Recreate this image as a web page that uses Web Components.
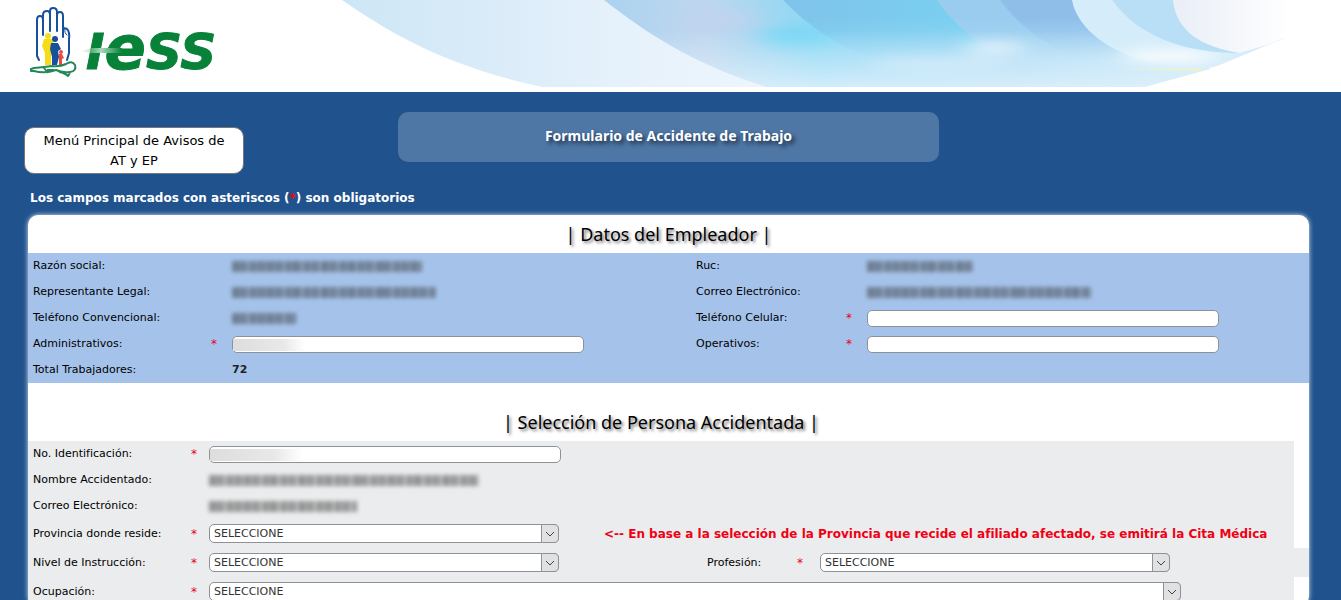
<!DOCTYPE html>
<html lang="es">
<head>
<meta charset="utf-8">
<meta name="viewport" content="width=device-width, initial-scale=1">
<title>Formulario de Accidente de Trabajo</title>
<style>
    body {
        margin: 0;
        min-height: 100vh;
        background: #20528d;
        color: #000;
        font: 11px/16px Verdana, "DejaVu Sans", sans-serif;
        overflow-x: hidden;
    }
</style>
</head>
<body>
<iess-header></iess-header>
<form-toolbar>
    <menu-button slot="menu">Menú Principal de Avisos de AT y EP</menu-button>
    Formulario de Accidente de Trabajo
</form-toolbar>
<required-notice></required-notice>
<form-panel>
    <form-section heading="Datos del Empleador" class="employer">
        <form-field label="Razón social:" type="hidden-value" size="190"></form-field>
        <form-field label="Ruc:" type="hidden-value" size="106"></form-field>
        <form-field label="Representante Legal:" type="hidden-value" size="204"></form-field>
        <form-field label="Correo Electrónico:" type="hidden-value" size="224"></form-field>
        <form-field label="Teléfono Convencional:" type="hidden-value" size="64"></form-field>
        <form-field label="Teléfono Celular:" type="text" required></form-field>
        <form-field label="Administrativos:" type="text" required covered="72"></form-field>
        <form-field label="Operativos:" type="text" required></form-field>
        <form-field label="Total Trabajadores:" type="output" value="72"></form-field>
    </form-section>
    <form-section heading="Selección de Persona Accidentada" class="person">
        <form-row><form-field label="No. Identificación:" type="text" required covered="92"></form-field></form-row>
        <form-row><form-field label="Nombre Accidentado:" type="hidden-value" size="270"></form-field></form-row>
        <form-row><form-field label="Correo Electrónico:" type="hidden-value" size="148"></form-field></form-row>
        <form-row tall>
            <form-field label="Provincia donde reside:" type="select" required></form-field>
            <field-note>&lt;-- En base a la selección de la Provincia que recide el afiliado afectado, se emitirá la Cita Médica</field-note>
        </form-row>
        <form-row tall full>
            <form-field label="Nivel de Instrucción:" type="select" required></form-field>
            <form-field class="second" label="Profesión:" type="select" required></form-field>
        </form-row>
        <form-row tall><form-field class="wide" label="Ocupación:" type="select" required></form-field></form-row>
    </form-section>
</form-panel>

<script>
    class IessHeader extends HTMLElement {
        connectedCallback() {
            this.attachShadow({ mode: 'open' });
            this.shadowRoot.innerHTML = `
                <style>
                    :host {
                        display: block;
                        background: #fff;
                    }

                    header {
                        display: flex;
                        height: 92px;
                        overflow: hidden;
                    }

                    .logo {
                        flex: 0 0 320px;
                        width: 320px;
                        height: 92px;
                    }

                    .logo text {
                        font-family: "DejaVu Sans", sans-serif;
                        font-weight: bold;
                        font-style: italic;
                        font-size: 50px;
                        fill: #078238;
                        stroke: #078238;
                        stroke-width: 1px;
                    }

                    .logo .tall {
                        font-size: 61px;
                    }

                    .sky {
                        flex: 1;
                        min-width: 0;
                        height: 92px;
                    }
                </style>

                <header>
                    <svg class="logo" viewBox="0 0 320 92" role="img" aria-label="IESS">
                        <defs>
                            <linearGradient id="streak">
                                <stop offset="0" stop-color="#8fc9a6" stop-opacity="0"/>
                                <stop offset=".5" stop-color="#a9d8bb"/>
                                <stop offset="1" stop-color="#078238"/>
                            </linearGradient>
                        </defs>
                        <!-- hand -->
                        <g fill="none" stroke="#17509c" stroke-width="2" stroke-linecap="round" stroke-linejoin="round">
                            <path d="M39 60 L37 56 V20 Q37 16 40 16 Q43 16 43 20 V35"/>
                            <path d="M43 33 V15 Q43 11 47 11 Q50 11 50 15 V31"/>
                            <path d="M50 29 V11 Q50 8 53 8 Q57 8 57 12 V31"/>
                            <path d="M57 29 V15 Q57 12 60 12 Q63 12 63 16 V37"/>
                            <path d="M63 30 Q64 27 67 29 Q70 32 69 39 V53 L67 60"/>
                            <path d="M65 29 Q64 33 67 35" stroke-width="1"/>
                        </g>
                        <!-- family -->
                        <g fill="#f6dc16">
                            <circle cx="48" cy="36" r="3"/>
                            <path d="M44 39 H52 L54 43 L51 52 V65 H45 V53 L42 46 Z"/>
                        </g>
                        <g fill="#17509c">
                            <circle cx="55" cy="39" r="3"/>
                            <path d="M51 43 H58 L61 49 L58 51 L59 57 L57 65 H52 V57 L50 49 Z"/>
                        </g>
                        <g fill="#ec4a3c">
                            <circle cx="61" cy="52" r="2"/>
                            <path d="M59 54 H62 L64 58 L62 59 V65 H59 Z"/>
                        </g>
                        <!-- cradle -->
                        <path d="M34 68 Q45 67 52 66 Q60 67 66 64 Q72 60 75 65 Q77 71 70 72 Q62 73 56 70 Q45 74 34 71 L31 71 V69 Z M44 68 L48 73 M47 70 H54 M59 72 Q65 73 68 76 L70 73" fill="none" stroke="#238858" stroke-width="2" stroke-linejoin="round"/>
                        <text x="86" y="69">I<tspan class="tall">e</tspan>SS</text>
                        <path d="M80 51 L92 48 H122 V53 H90 Z" fill="url(#streak)"/>
                    </svg>
                    <svg class="sky" viewBox="320 0 1021 92" preserveAspectRatio="xMinYMin slice" aria-hidden="true">
                        <defs>
                            <clipPath id="arc">
                                <path d="M342 0 C388 32 445 66 542 87 H1144 L1210 69 L1285 38 V0 Z"/>
                            </clipPath>
                            <linearGradient id="pale">
                                <stop offset="0" stop-color="#cbe5f5"/>
                                <stop offset=".6" stop-color="#e5f1fb"/>
                                <stop offset="1" stop-color="#f0f7fd"/>
                            </linearGradient>
                            <linearGradient id="mid">
                                <stop offset="0" stop-color="#abd3ef"/>
                                <stop offset=".17" stop-color="#bfd6ee"/>
                                <stop offset=".35" stop-color="#8bd8f5"/>
                                <stop offset=".65" stop-color="#a4d8f3"/>
                                <stop offset="1" stop-color="#c9e9f9"/>
                            </linearGradient>
                            <linearGradient id="deep">
                                <stop offset="0" stop-color="#80c3ea"/>
                                <stop offset=".7" stop-color="#78d2f2"/>
                                <stop offset="1" stop-color="#b5ddf5"/>
                            </linearGradient>
                            <linearGradient id="mist" x2="0" y2="1">
                                <stop offset=".35" stop-color="#e3f2fc" stop-opacity="0"/>
                                <stop offset="1" stop-color="#e3f2fc" stop-opacity=".8"/>
                            </linearGradient>
                            <linearGradient id="edge">
                                <stop offset="0" stop-color="#e9eef7"/>
                                <stop offset="1" stop-color="#fff"/>
                            </linearGradient>
                            <linearGradient id="fall" x2="0" y2="1">
                                <stop offset=".3" stop-color="#fff"/>
                                <stop offset="1" stop-color="#000"/>
                            </linearGradient>
                            <mask id="fade" maskUnits="userSpaceOnUse" x="320" y="0" width="1021" height="60">
                                <rect x="320" width="1021" height="60" fill="url(#fall)"/>
                            </mask>
                            <filter id="soft" x="-50%" y="-100%" width="200%" height="300%">
                                <feGaussianBlur stdDeviation="12 6"/>
                            </filter>
                        </defs>
                        <g clip-path="url(#arc)">
                            <rect x="320" width="490" height="87" fill="url(#pale)"/>
                            <path d="M604 0 C645 32 694 65 768 87 H1210 V0 Z" fill="url(#mid)"/>
                            <g filter="url(#soft)">
                                <ellipse cx="718" cy="20" rx="36" ry="12" fill="#c0d3ed" opacity=".8"/>
                                <ellipse cx="797" cy="39" rx="35" ry="11" fill="#78d7f5"/>
                            </g>
                            <g mask="url(#fade)">
                                <path d="M783 0 C806 24 838 48 886 64 H1090 V0 Z" fill="url(#deep)"/>
                                <path d="M937 0 C947 15 965 35 1005 62 H1110 V0 Z" fill="#9accef"/>
                                <path d="M1000 0 C1016 22 1045 48 1090 62 H1130 V0 Z" fill="#8fbfe9"/>
                            </g>
                            <g filter="url(#soft)">
                                <ellipse cx="995" cy="48" rx="30" ry="8" fill="#edf8fe" opacity=".7"/>
                                <ellipse cx="940" cy="64" rx="70" ry="8" fill="#cdeafa" opacity=".6"/>
                            </g>
                            <path d="M604 0 C645 32 694 65 768 87 H1210 V0 Z" fill="url(#mist)"/>
                            <path d="M1072 0 C1078 33 1123 69 1208 68 L1290 52 V0 Z" fill="#d5edfa"/>
                            <ellipse cx="1170" cy="56" rx="50" ry="7" fill="#f7fbfe" filter="url(#soft)"/>
                            <path d="M1112 0 C1138 36 1183 53 1240 53 L1290 38 V0 Z" fill="#b9dff6"/>
                            <path d="M1173 0 C1176 31 1201 47 1240 53 L1290 38 V0 Z" fill="url(#edge)"/>
                            <path d="M1120 69 L1207 68 L1198 71 Z" fill="#eaf2cf"/>
                        </g>
                    </svg>
                </header>
            `;
        }
    }

    class FormToolbar extends HTMLElement {
        connectedCallback() {
            this.attachShadow({ mode: 'open' });
            this.shadowRoot.innerHTML = `
                <style>
                    :host {
                        display: grid;
                        grid-template-columns: 1fr minmax(300px, 42%) 1fr;
                        align-items: start;
                        padding: 20px 28px 0 24px;
                    }

                    .menu {
                        padding-top: 15px;
                    }

                    h1 {
                        margin: 0;
                        padding: 14px 0 16px;
                        border-radius: 10px;
                        background: #4f77a5;
                        color: #fff;
                        text-align: center;
                        text-shadow: 3px 3px 4px #1a2b44;
                        font: bold 14px/20px "Noto Sans", sans-serif;
                    }
                </style>

                <div class="menu"><slot name="menu"></slot></div>
                <h1><slot></slot></h1>
            `;
        }
    }

    class MenuButton extends HTMLElement {
        connectedCallback() {
            this.attachShadow({ mode: 'open' });
            this.shadowRoot.innerHTML = `
                <style>
                    :host {
                        display: block;
                        width: 220px;
                    }

                    button {
                        width: 100%;
                        padding: 3px 16px 2px;
                        border: 1px solid #777;
                        border-radius: 10px;
                        background: #fff;
                        color: #000;
                        font: 13px/20px Verdana, "DejaVu Sans", sans-serif;
                        cursor: pointer;
                    }
                </style>

                <button type="button"><slot></slot></button>
            `;
        }
    }

    class RequiredNotice extends HTMLElement {
        connectedCallback() {
            this.attachShadow({ mode: 'open' });
            this.shadowRoot.innerHTML = `
                <style>
                    :host {
                        display: block;
                        padding: 16px 30px 9px;
                        color: #fff;
                        font-size: 12px;
                        font-weight: bold;
                    }

                    p {
                        margin: 0;
                    }

                    span {
                        color: #f00;
                    }
                </style>

                <p>Los campos marcados con asteriscos (<span>*</span>) son obligatorios</p>
            `;
        }
    }

    class FormPanel extends HTMLElement {
        connectedCallback() {
            this.attachShadow({ mode: 'open' });
            this.shadowRoot.innerHTML = `
                <style>
                    :host {
                        display: block;
                        margin: 0 32px 0 28px;
                        border-radius: 10px;
                        background: #fff;
                        box-shadow: 0 0 5px #dde8f5;
                    }
                </style>

                <form><slot></slot></form>
            `;
        }
    }

    class FormSection extends HTMLElement {
        connectedCallback() {
            this.attachShadow({ mode: 'open' });
            this.shadowRoot.innerHTML = `
                <style>
                    :host {
                        display: block;
                    }

                    h2 {
                        margin: 0;
                        text-align: center;
                        text-shadow: 2px 2px 3px #777;
                        font: 18px/38px "Noto Sans", sans-serif;
                    }

                    :host(.employer) .rows {
                        display: grid;
                        grid-template-columns: 663fr 613fr;
                        grid-auto-rows: 26px;
                        padding-left: 5px;
                        background: #a5c3ea;
                    }

                    :host(.person) h2 {
                        margin-right: 15px;
                        padding-top: 20px;
                    }

                    ::slotted(form-field) {
                        --label: 178px;
                        --mark: 21px;
                    }

                    ::slotted(form-field:nth-child(even)) {
                        --label: 150px;
                    }
                </style>

                <h2>| ${this.getAttribute('heading')} |</h2>
                <div class="rows"><slot></slot></div>
            `;
        }
    }

    class FormRow extends HTMLElement {
        connectedCallback() {
            this.attachShadow({ mode: 'open' });
            this.shadowRoot.innerHTML = `
                <style>
                    :host {
                        display: flex;
                        align-items: center;
                        height: 26px;
                        margin-right: 15px;
                        padding-left: 5px;
                        background: #ebeced;
                    }

                    :host([tall]) {
                        height: 29px;
                    }

                    :host([full]) {
                        margin-right: 0;
                    }

                    ::slotted(form-field) {
                        --label: 158px;
                        --mark: 18px;
                        --control: 350px;
                    }

                    ::slotted(.second) {
                        --label: 90px;
                        --mark: 23px;
                        margin-left: 148px;
                    }

                    ::slotted(.wide) {
                        --control: 972px;
                    }

                    ::slotted(field-note) {
                        margin-left: 45px;
                    }
                </style>

                <slot></slot>
            `;
        }
    }

    class FieldNote extends HTMLElement {
        connectedCallback() {
            this.attachShadow({ mode: 'open' });
            this.shadowRoot.innerHTML = `
                <style>
                    :host {
                        display: block;
                        color: #f00014;
                        font-size: 12px;
                        font-weight: bold;
                        white-space: nowrap;
                    }
                </style>

                <slot></slot>
            `;
        }
    }

    // type: text | select | output | hidden-value
    class FormField extends HTMLElement {
        connectedCallback() {
            this.attachShadow({ mode: 'open' });
            this.shadowRoot.innerHTML = `
                <style>
                    :host {
                        display: grid;
                        grid-template-columns: var(--label) var(--mark) auto;
                        align-items: center;
                        justify-content: start;
                    }

                    .mark {
                        color: #e8001c;
                        font-size: 12px;
                    }

                    input, select {
                        box-sizing: border-box;
                        display: block;
                        border: 1px solid #8d9299;
                        border-radius: 5px;
                        background: #fff;
                        color: #333;
                        font: 11px/16px Verdana, "DejaVu Sans", sans-serif;
                    }

                    input {
                        width: 352px;
                        height: 17px;
                        padding: 0 2px;
                    }

                    select {
                        width: var(--control);
                        height: 19px;
                        padding: 0 20px 0 4px;
                        appearance: none;
                    }

                    .box {
                        position: relative;
                    }

                    .arrow {
                        position: absolute;
                        top: 0;
                        right: 0;
                        width: 18px;
                        height: 19px;
                        pointer-events: none;
                    }

                    .cover {
                        position: absolute;
                        top: 3px;
                        left: 1px;
                        height: 12px;
                        background: linear-gradient(90deg, #ddd, #e8e8e8 70%, #fff);
                    }

                    output {
                        color: #222;
                        font-weight: bold;
                    }

                    .smudge {
                        display: block;
                        height: 11px;
                        opacity: .6;
                        filter: blur(2px);
                        background:
                            repeating-linear-gradient(90deg, transparent 0 4px, #0003 4px 7px, transparent 7px 29px),
                            repeating-linear-gradient(90deg, #333c 0 5px, #3338 5px 7px, #333b 7px 15px, #3336 15px 18px);
                    }
                </style>

                <label for="control">${this.getAttribute('label')}</label>
                <span class="mark">${this.hasAttribute('required') ? '*' : ''}</span>
                ${this.control()}
            `;
        }

        control() {
            switch (this.getAttribute('type')) {
                case 'select':
                    return `
                        <div class="box">
                            <select id="control"><option>SELECCIONE</option></select>
                            <svg class="arrow" viewBox="0 0 18 19" aria-hidden="true">
                                <path d="M0.5 0.5 H13 Q17.5 0.5 17.5 5 V14 Q17.5 18.5 13 18.5 H0.5 Z" fill="#e1e1e1" stroke="#8d9299"/>
                                <path d="M5 8 L9 12 L13 8" fill="none" stroke="#444"/>
                            </svg>
                        </div>`;
                case 'output':
                    return `<output id="control">${this.getAttribute('value')}</output>`;
                case 'hidden-value':
                    return `<span class="smudge" style="width: ${this.getAttribute('size')}px"></span>`;
                default:
                    return `
                        <div class="box">
                            <input id="control" type="text">
                            ${this.hasAttribute('covered') ? `<span class="cover" style="width: ${this.getAttribute('covered')}px"></span>` : ''}
                        </div>`;
            }
        }
    }

    customElements.define('iess-header', IessHeader);
    customElements.define('form-toolbar', FormToolbar);
    customElements.define('menu-button', MenuButton);
    customElements.define('required-notice', RequiredNotice);
    customElements.define('form-panel', FormPanel);
    customElements.define('form-section', FormSection);
    customElements.define('form-row', FormRow);
    customElements.define('field-note', FieldNote);
    customElements.define('form-field', FormField);
</script>
</body>
</html>
